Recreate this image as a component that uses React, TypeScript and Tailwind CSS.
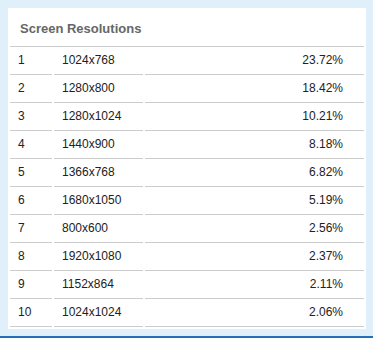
const rows = [
  ['1', '1024x768', '23.72%'],
  ['2', '1280x800', '18.42%'],
  ['3', '1280x1024', '10.21%'],
  ['4', '1440x900', '8.18%'],
  ['5', '1366x768', '6.82%'],
  ['6', '1680x1050', '5.19%'],
  ['7', '800x600', '2.56%'],
  ['8', '1920x1080', '2.37%'],
  ['9', '1152x864', '2.11%'],
  ['10', '1024x1024', '2.06%'],
]

export default function App() {
  return (
    <div className="w-[373px] h-[338px] bg-[#dff0fb] flex flex-col" style={{ fontFamily: '"Liberation Sans", Arial, sans-serif' }}>
      <div className="flex-1 pt-[8px] pl-[8px] pr-[7px]">
        <div className="bg-white w-[358px] px-[2px] pb-[2px]">
          <div className="pt-[13px] pb-[10px] px-[10px] border-b border-[#cccccc] text-[13px] leading-[15px] font-bold text-[#666666]">
            Screen Resolutions
          </div>
          {rows.map(r => (
            <div key={r[0]} className="flex gap-[2px] text-[12px] leading-[27px] text-[#222222]">
              <div className="w-[42px] pl-[8px] border-b border-[#cccccc]">{r[0]}</div>
              <div className="w-[89px] pl-[8px] border-b border-[#cccccc]">{r[1]}</div>
              <div className="flex-1 pr-[21px] text-right border-b border-[#cccccc]">{r[2]}</div>
            </div>
          ))}
        </div>
      </div>
      <div className="h-[2px] bg-[#2470b8]" />
    </div>
  )
}
